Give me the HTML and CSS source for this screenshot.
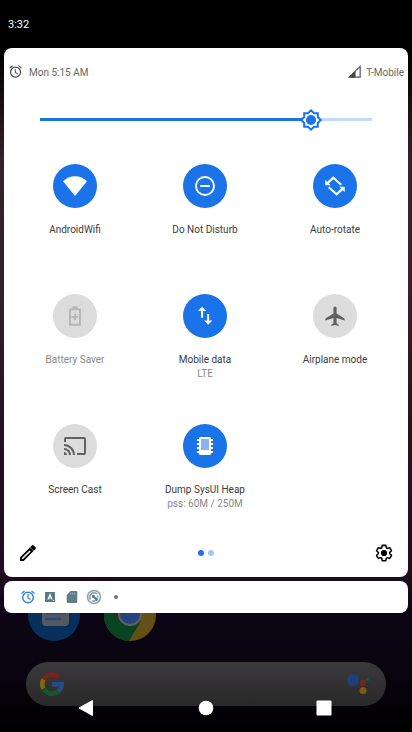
FILE: index.html
```html
<!DOCTYPE html>
<html lang="en">
<head>
<meta charset="utf-8">
<meta name="viewport" content="width=device-width, initial-scale=1">
<title>Quick settings</title>
<link rel="stylesheet" href="styles.css">
</head>
<body>
<div class="screen">
  <div class="home">
    <div class="dock">
      <svg class="app" viewBox="0 0 52 52" aria-hidden="true">
        <circle cx="26" cy="26" r="26" fill="#07305c"/>
        <rect x="14" y="12" width="27" height="25" rx="4" fill="#55595d"/>
        <path d="M18 24h19M18 30h14" stroke="#274a7c" stroke-width="2.4" stroke-linecap="round"/>
      </svg>
      <svg class="app" viewBox="0 0 52 52" aria-hidden="true">
        <circle cx="26" cy="26" r="26" fill="#644f18"/>
        <path d="M26 26 3.500 13A26 26 0 0 0 25 52L37 32z" fill="#084322"/>
        <path d="M3.500 13A26 26 0 0 1 48.500 13L26 14 15 32z" fill="#521a16"/>
        <circle cx="26" cy="25" r="12" fill="#606166"/>
        <circle cx="26" cy="25" r="10" fill="#234579"/>
      </svg>
    </div>
    <div class="search">
      <svg class="google" viewBox="0 0 24 24" fill="none" stroke-width="4.600" aria-hidden="true">
        <path d="M18.600 5.400A9.700 9.700 0 0 0 3.500 7.300" stroke="#7c241c"/>
        <path d="M3.500 7.300a9.700 9.700 0 0 0 0 9.400" stroke="#86650a"/>
        <path d="M3.500 16.700a9.700 9.700 0 0 0 14.600 2.700" stroke="#14552a"/>
        <path d="M18.100 19.400A9.700 9.700 0 0 0 21.700 12.300H12" stroke="#254a86"/>
      </svg>
      <svg class="assistant" viewBox="0 0 24 24" aria-hidden="true">
        <circle cx="7" cy="8" r="6" fill="#1d4078"/>
        <circle cx="17" cy="11" r="3.200" fill="#77261d"/>
        <circle cx="17" cy="18.500" r="3.500" fill="#7b5c08"/>
        <circle cx="21.500" cy="7.500" r="1.500" fill="#185a2e"/>
      </svg>
    </div>
  </div>

  <header class="status">3:32</header>

  <main class="panel">
    <div class="info">
      <svg class="info-icon" viewBox="0 0 24 24" fill="#4a4a4a" aria-hidden="true"><path d="M22 5.700l-4.600-3.900-1.300 1.500 4.600 3.900L22 5.700zM7.900 3.400L6.600 1.900 2 5.700l1.300 1.500 4.600-3.800zM12.500 8H11v6l4.700 2.900.8-1.200-4-2.400V8zM12 4a9 9 0 1 0 0 18 9 9 0 0 0 0-18zm0 16a7 7 0 1 1 0-14 7 7 0 0 1 0 14z"/></svg>
      <span class="alarm-time">Mon 5:15 AM</span>
      <svg class="info-icon" viewBox="0 0 14 14" aria-hidden="true"><path d="M12.300 2.200v10.100H2.200z" fill="none" stroke="#555" stroke-width="1.100"/><path d="M8 6.500v6H1.500z" fill="#444"/></svg>
      <span class="carrier">T-Mobile</span>
    </div>

    <div class="brightness">
      <input class="slider" type="range" min="0" max="100" value="82" aria-label="Brightness">
      <svg class="sun" viewBox="0 0 22 22" aria-hidden="true">
        <path d="M11 1.300 14 4.200H17.800V8L20.700 11l-2.900 3v3.800H14L11 20.700l-3-2.900H4.200V14L1.300 11l2.900-3V4.200H8z" fill="#fff" stroke="#1a73e8" stroke-width="2"/>
        <circle cx="11" cy="11" r="5" fill="#1a73e8"/>
      </svg>
    </div>

    <div class="tiles">
      <button class="tile on" type="button">
        <span class="disc"><svg class="wide" viewBox="0 0 24 24" fill="#fff"><path d="M12 22 0 7.300C3.200 4 7.400 2.200 12 2.200S20.800 4 24 7.300z"/></svg></span>
        <span class="name">AndroidWifi</span>
      </button>
      <button class="tile on" type="button">
        <span class="disc"><svg viewBox="0 0 24 24" fill="none" stroke="#fff" stroke-width="2.300"><circle cx="12" cy="12" r="10.800"/><path d="M6.200 12h11.600"/></svg></span>
        <span class="name">Do Not Disturb</span>
      </button>
      <button class="tile on" type="button">
        <span class="disc"><svg viewBox="0 0 24 24" fill="none" stroke="#fff" stroke-width="2.600"><path d="M19.500 10.500 10 2 3 8.500M4.500 13.500l9.500 8.500L21 15.500"/><path d="M.3 4.500v6.500h6.500zM23.700 19.500V13h-6.500z" fill="#fff" stroke="none"/></svg></span>
        <span class="name">Auto-rotate</span>
      </button>
      <button class="tile" type="button" disabled>
        <span class="disc"><svg viewBox="0 0 24 24" fill="none" stroke="#b5b5b5" stroke-width="2.300"><path d="M6 4h12v18.500H6zM12 9v8M8 13h8"/><path d="M9 2h6" stroke-width="3"/></svg></span>
        <span class="name">Battery Saver</span>
      </button>
      <button class="tile on" type="button">
        <span class="disc"><svg viewBox="0 0 24 24" fill="#fff"><path d="M8.500 1 3.500 6h3.800v8h2.400V6h3.800zM17 17.500V9.500h-2.400v8h-3.800L15.800 22.500l5-5z"/></svg></span>
        <span class="name">Mobile data</span>
        <span class="detail">LTE</span>
      </button>
      <button class="tile" type="button">
        <span class="disc"><svg viewBox="0 0 24 24" fill="#616161"><path d="M23.500 17.500v-2.400l-9.600-6V2.400a1.900 1.900 0 0 0-3.800 0v6.700l-9.600 6v2.400l9.600-3v6.100l-2.500 1.800V24l4.400-1.200 4.400 1.200v-1.600l-2.500-1.800v-6.100z"/></svg></span>
        <span class="name">Airplane mode</span>
      </button>
      <button class="tile" type="button">
        <span class="disc"><svg class="wide" viewBox="0 0 24 24" fill="#616161"><path d="M21 3H3c-1.100 0-2 .9-2 2v3h2V5h18v14h-7v2h7c1.100 0 2-.9 2-2V5c0-1.100-.9-2-2-2zM1 18v3h3c0-1.660-1.340-3-3-3zm0-4v2c2.760 0 5 2.240 5 5h2c0-3.870-3.130-7-7-7zm0-4v2a9 9 0 0 1 9 9h2c0-6.080-4.930-11-11-11z"/></svg></span>
        <span class="name">Screen Cast</span>
      </button>
      <button class="tile on" type="button">
        <span class="disc"><svg viewBox="0 0 20 20"><rect x="4" y="1" width="12" height="18" rx="1.500" fill="#fff"/><path d="M2 4h16M2 8h16M2 12h16M2 16h16" stroke="#fff" stroke-width="2"/><path d="M6 3h8v11H6z" fill="#8ab4f3"/></svg></span>
        <span class="name">Dump SysUI Heap</span>
        <span class="detail">pss: 60M / 250M</span>
      </button>
    </div>

    <footer class="tools">
      <button class="tool" type="button" aria-label="Edit tiles"><svg viewBox="0 0 24 24"><path d="M2.500 17.200V21.500h4.300L18.600 9.700l-4.300-4.300zM21 7.300a1.500 1.500 0 0 0 0-2.100L18.800 3a1.500 1.500 0 0 0-2.100 0l-2.100 2.100 4.300 4.300z"/><path d="M5 19 14.500 9.500" stroke="#fff" stroke-width="1.800"/></svg></button>
      <span class="pages"><i class="page current"></i><i class="page"></i></span>
      <button class="tool" type="button" aria-label="Settings"><svg viewBox="0 0 24 24"><path d="M19.430 12.980c.04-.32.07-.64.07-.98s-.03-.66-.07-.98l2.110-1.650c.19-.15.24-.42.12-.64l-2-3.460a.5.5 0 0 0-.61-.22l-2.490 1a7.300 7.300 0 0 0-1.690-.98l-.38-2.650A.49.49 0 0 0 14 2h-4a.49.49 0 0 0-.49.420l-.38 2.650c-.61.25-1.170.59-1.690.98l-2.490-1a.5.5 0 0 0-.61.22l-2 3.460c-.13.22-.07.49.12.64l2.110 1.650a7.900 7.900 0 0 0 0 1.960l-2.110 1.650c-.19.15-.24.42-.12.64l2 3.460c.12.22.39.3.61.22l2.490-1c.52.4 1.080.73 1.690.98l.38 2.650c.03.24.24.42.49.42h4c.25 0 .46-.18.49-.42l.38-2.650c.61-.25 1.170-.59 1.690-.98l2.490 1c.23.09.49 0 .61-.22l2-3.460a.5.5 0 0 0-.12-.64z" fill="none" stroke="#000" stroke-width="2" transform="translate(1 1) scale(.92)"/><circle cx="12" cy="12" r="3.700"/></svg></button>
    </footer>
  </main>

  <section class="notices" aria-label="Notifications">
    <svg class="notice" viewBox="0 0 22 22" fill="none" stroke="#2a82dc"><circle cx="11" cy="11.500" r="5.300" stroke-width="1.400"/><path d="M11 8v4l2.500 1.500M4.500 7.500l3-2.500M17.500 7.500l-3-2.500" stroke-width="1.200"/></svg>
    <svg class="notice" viewBox="0 0 22 22"><path d="M6 6h10v10H6z" fill="#587a87"/><path d="M9 13.500 11 8.500l2 5M9.500 12h3" fill="none" stroke="#fff" stroke-width="1.200"/><path d="M14 14h1v1h-1z" fill="#fff"/></svg>
    <svg class="notice" viewBox="0 0 22 22"><path d="M9.500 5H15a1.300 1.300 0 0 1 1.300 1.300v9.400A1.300 1.300 0 0 1 15 17H7a1.300 1.300 0 0 1-1.300-1.300V9z" fill="#607d8b"/><path d="M9.500 6.500v2M11.500 6.500v2M13.500 6.500v2" stroke="#93a7b0"/></svg>
    <svg class="notice" viewBox="0 0 22 22" fill="none" stroke="#8fa4ae"><circle cx="11" cy="11" r="6.500" stroke-width="1.600"/><path d="M7.500 13.500A4.300 4.300 0 0 1 14 8M14.500 9.500a4.300 4.300 0 0 1-5.500 5.300" stroke-width="1.700"/><path d="M9.500 9.500l5 5" stroke="#607d8b" stroke-width="2"/><circle cx="10.500" cy="10.500" r="1.600" fill="#607d8b" stroke="none"/></svg>
    <svg class="notice" viewBox="0 0 22 22"><circle cx="11" cy="11" r="2" fill="#757575"/></svg>
  </section>

  <nav class="nav">
    <button class="key" type="button" aria-label="Back"><svg viewBox="0 0 16 16"><path d="M-1 8 12.500 .5v15z" fill="#fff" stroke="#fff" stroke-linejoin="round"/></svg></button>
    <button class="key" type="button" aria-label="Home"><svg viewBox="0 0 16 16"><circle cx="8" cy="8" r="7.300" fill="#fff"/></svg></button>
    <button class="key" type="button" aria-label="Recent apps"><svg viewBox="0 0 16 16"><rect x=".5" y=".5" width="15" height="15" rx="1" fill="#fff"/></svg></button>
  </nav>
</div>
</body>
</html>
```
FILE: styles.css
```css
* {
  box-sizing: border-box;
}

body {
  margin: 0;
  font: 10px/14px Roboto, "Noto Sans", sans-serif;
  color: #3c3c3c;
  background: #000;
}

button {
  padding: 0;
  border: 0;
  background: none;
  font: inherit;
  color: inherit;
}

svg {
  display: block;
  overflow: visible;
}

.screen {
  position: relative;
  display: flex;
  flex-direction: column;
  min-height: 100vh;
  background: linear-gradient(#000 7%, #100a0d 12%, #35232c 22%, #35202b 40%, #24111f 60%, #210d20 78%, #0d0515 83%, #0a0411 90%, #040106 97%, #000);
}

/* Launcher lying behind the shade */
.home {
  position: absolute;
  inset: 0;
  display: flex;
  flex-direction: column;
  justify-content: flex-end;
  gap: 21px;
  padding: 0 26px 26px;
}

.dock {
  display: flex;
  gap: 24px;
  padding-left: 2px;
}

.app {
  width: 52px;
  height: 52px;
}

.search {
  display: flex;
  align-items: center;
  justify-content: space-between;
  height: 44px;
  padding: 0 16px 0 14px;
  border-radius: 22px;
  background: linear-gradient(#3b393b, #2a292a);
}

.google,
.assistant {
  width: 24px;
  height: 24px;
}

.status {
  height: 48px;
  padding: 1px 8px 0;
  font-size: 11px;
  line-height: 48px;
  color: #fff;
  background: #000;
}

.panel,
.notices {
  position: relative;
  margin: 0 4px 4px;
  border-radius: 8px;
  background: #fff;
}

.panel {
  padding-bottom: 12px;
}

.info {
  display: flex;
  align-items: center;
  height: 48px;
  padding: 1px 4px 0;
  color: #666;
}

.info-icon {
  width: 15px;
  height: 15px;
  margin-bottom: 2px;
}

.alarm-time {
  flex: 1;
  padding-left: 6px;
}

.carrier {
  padding-left: 4px;
}

.brightness {
  position: relative;
  height: 48px;
  margin: 0 36px;
}

.slider {
  display: block;
  appearance: none;
  width: 100%;
  height: 47px;
  margin: 0;
  border-radius: 2px;
  background: linear-gradient(90deg, #1a73e8 82%, #c3daf9 82%) center / 100% 3px no-repeat;
}

.slider::-webkit-slider-thumb {
  appearance: none;
  width: 22px;
  height: 22px;
}

.sun {
  position: absolute;
  top: 50%;
  left: 82%;
  width: 22px;
  height: 22px;
  margin: -11px 0 0 -12px;
  pointer-events: none;
}

.tiles {
  display: grid;
  grid-template-columns: repeat(3, 1fr);
  grid-auto-rows: 130px;
  padding: 20px 8px 0 6px;
}

.tile {
  display: flex;
  flex-direction: column;
  align-items: center;
}

.disc {
  display: grid;
  place-items: center;
  width: 44px;
  height: 44px;
  margin-bottom: 15px;
  border-radius: 50%;
  background: #dcdcdc;
}

.on .disc {
  background: #1a73e8;
}

.disc svg {
  width: 20px;
  height: 20px;
}

.disc .wide {
  width: 24px;
  height: 24px;
}

.tile:disabled,
.detail {
  color: #8a8a8a;
}

.tools {
  display: flex;
  align-items: center;
  justify-content: space-between;
  height: 24px;
  margin: -13px 14px 0;
}

.tool svg {
  width: 20px;
  height: 20px;
}

.pages {
  display: flex;
  gap: 4px;
}

.page {
  width: 6px;
  height: 6px;
  border-radius: 50%;
  background: #a3c7f6;
}

.current {
  background: #1a73e8;
}

.notices {
  display: flex;
  align-items: center;
  height: 32px;
  padding: 0 13px;
}

.notice {
  width: 22px;
  height: 22px;
}

.nav {
  position: relative;
  display: flex;
  align-items: center;
  justify-content: center;
  gap: 102px;
  height: 48px;
  margin-top: auto;
}

.key svg {
  width: 16px;
  height: 16px;
}
```
